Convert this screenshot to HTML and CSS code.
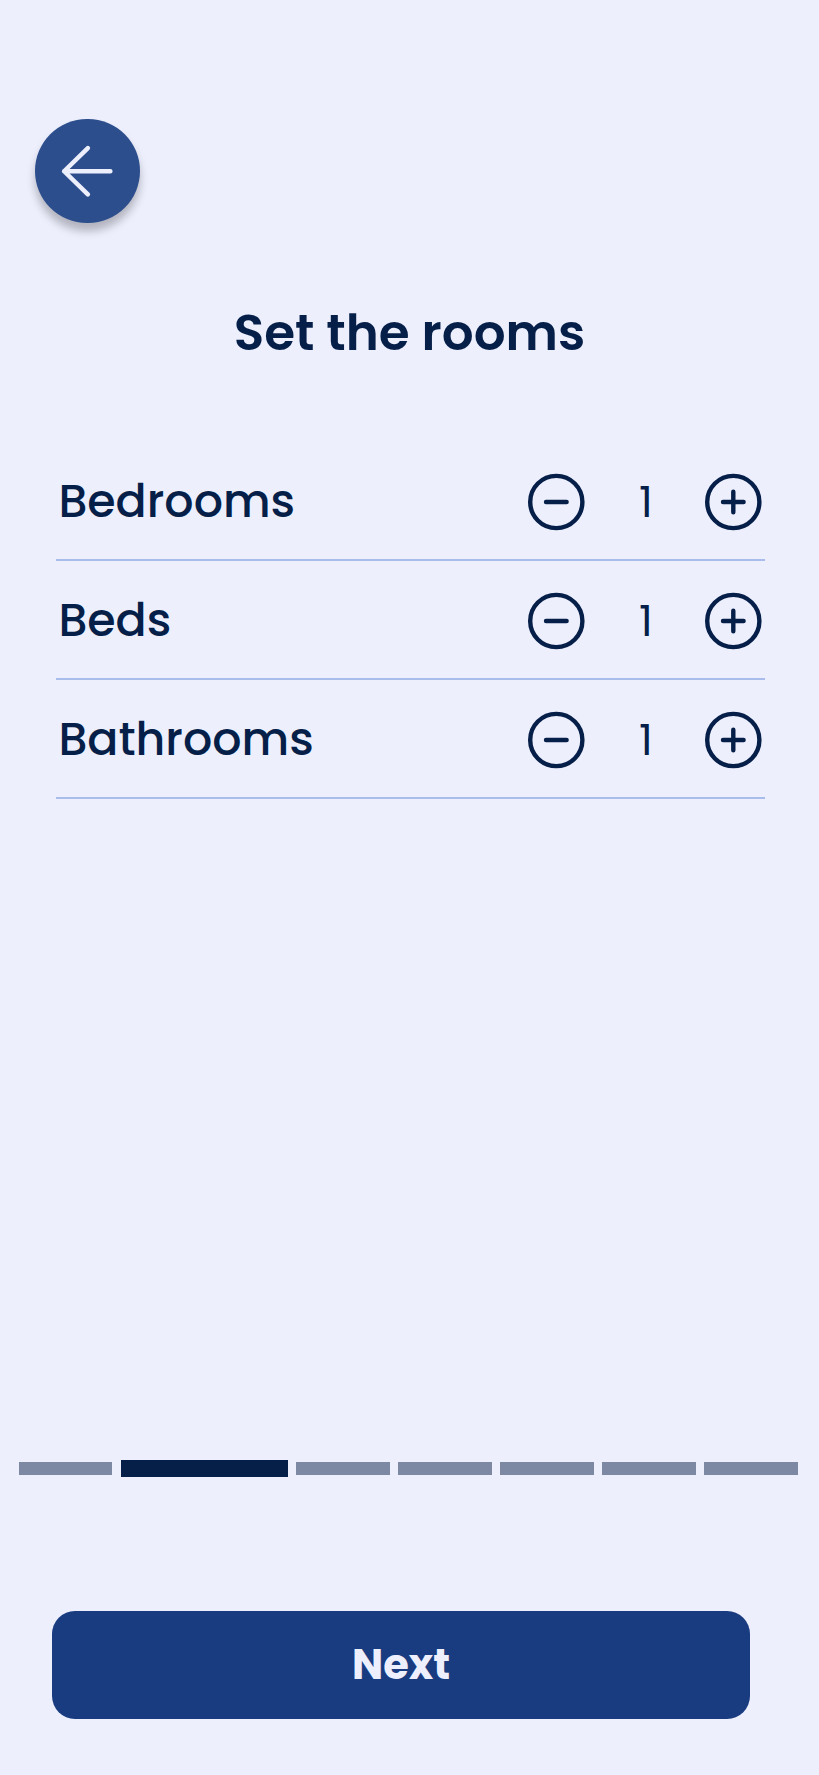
FILE: index.html
```html
<!DOCTYPE html>
<html lang="en">
<head>
<meta charset="utf-8">
<title>Set the rooms</title>
<link rel="stylesheet" href="styles.css">
</head>
<body>
<svg class="defs" width="0" height="0" aria-hidden="true">
  <symbol id="minus" viewBox="0 0 58 58"><circle cx="29.3" cy="29" r="26.1"/><path d="M19 29h20.6"/></symbol>
  <symbol id="plus" viewBox="0 0 58 58"><circle cx="29.3" cy="29" r="26.1"/><path d="M19 29h20.6M29.3 18.7v20.6"/></symbol>
</svg>
<main class="screen">
  <button class="back" aria-label="Back">
    <svg viewBox="0 0 104 104"><path d="M75 52H29M52.6 29L29 52l23.6 23"/></svg>
  </button>
  <h1 class="title">Set the rooms</h1>
  <section class="rooms">
    <div class="row">
      <span class="label">Bedrooms</span>
      <div class="stepper">
        <button class="step" aria-label="Fewer bedrooms"><svg><use href="#minus"/></svg></button>
        <span class="count">1</span>
        <button class="step" aria-label="More bedrooms"><svg><use href="#plus"/></svg></button>
      </div>
    </div>
    <div class="row">
      <span class="label">Beds</span>
      <div class="stepper">
        <button class="step" aria-label="Fewer beds"><svg><use href="#minus"/></svg></button>
        <span class="count">1</span>
        <button class="step" aria-label="More beds"><svg><use href="#plus"/></svg></button>
      </div>
    </div>
    <div class="row">
      <span class="label">Bathrooms</span>
      <div class="stepper">
        <button class="step" aria-label="Fewer bathrooms"><svg><use href="#minus"/></svg></button>
        <span class="count">1</span>
        <button class="step" aria-label="More bathrooms"><svg><use href="#plus"/></svg></button>
      </div>
    </div>
  </section>
  <div class="progress">
    <i class="bar"></i><i class="bar active"></i><i class="bar"></i><i class="bar"></i><i class="bar"></i><i class="bar"></i><i class="bar"></i>
  </div>
  <button class="next">Next</button>
</main>
</body>
</html>
```
FILE: styles.css
```css
* { box-sizing: border-box; }
body { margin: 0; background: #edeffd; }
button { padding: 0; border: 0; background: none; font: inherit; color: inherit; }
.defs { display: block; }
.screen {
  display: flex;
  flex-direction: column;
  width: 819px;
  height: 1775px;
  padding-top: 118.5px;
  background: #edeffd;
  color: #061f49;
  font-family: Poppins, Inter, sans-serif;
}
.back {
  width: 104.5px;
  height: 104.5px;
  margin-left: 35.3px;
  border-radius: 50%;
  background: #2c4e8d;
  box-shadow: 0 8px 8px rgba(0, 0, 0, .25);
}
.back svg {
  display: block;
  width: 100%;
  height: 100%;
  fill: none;
  stroke: #edeffd;
  stroke-width: 4.5;
  stroke-linecap: round;
  stroke-linejoin: round;
}
.title {
  margin: 72px 0 0;
  height: 76px;
  line-height: 76px;
  font-size: 50px;
  font-weight: 600;
  text-align: center;
  white-space: nowrap;
}
.rooms { margin: 71px 54px 0 56px; }
.row {
  display: flex;
  justify-content: space-between;
  height: 118.9px;
  padding: 30.8px 3px 0 2px;
  border-bottom: 2px solid #a9bdec;
}
.label {
  height: 58px;
  padding-left: .4px;
  line-height: 56px;
  font-size: 45.9px;
  font-weight: 500;
  white-space: nowrap;
}
.stepper { display: flex; height: 58px; }
.step, .step svg { display: block; width: 58px; height: 58px; }
.step svg {
  fill: none;
  stroke: #061f49;
  stroke-width: 4.4;
  stroke-linecap: round;
}
.count {
  width: 119px;
  padding-left: 3px;
  line-height: 59px;
  font-size: 43px;
  text-align: center;
}
.progress {
  display: flex;
  align-items: center;
  gap: 8.2px;
  height: 17px;
  margin: 661px 0 0 18.7px;
}
.bar { width: 93.8px; height: 13px; background: #7d88a3; }
.active { width: 167px; height: 17px; background: #061f49; }
.next {
  width: 698px;
  height: 108px;
  margin: 133.9px 0 0 52px;
  border-radius: 23px;
  background: #193b80;
  color: #edeffd;
  font-size: 41.5px;
  font-weight: 700;
}
```
